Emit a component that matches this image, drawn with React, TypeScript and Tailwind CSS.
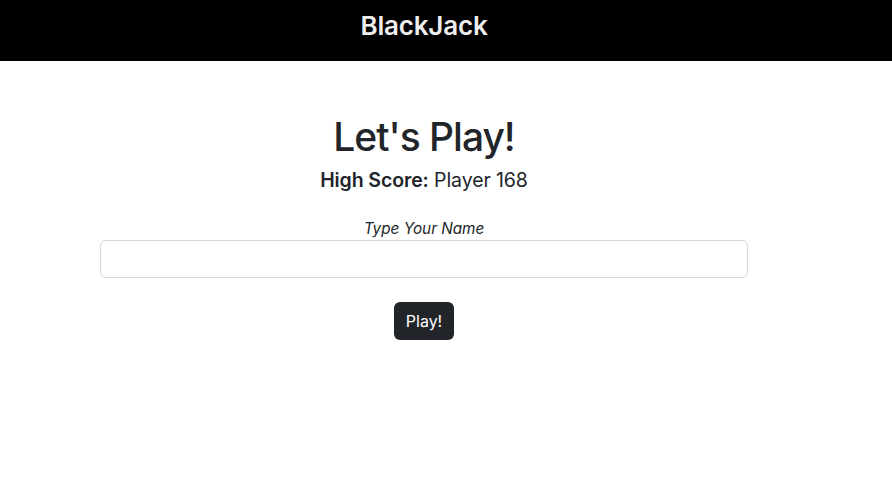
import { useState } from "react";

export default function App() {
  const [name, setName] = useState("");

  return (
    <div className="min-h-[487px] bg-white text-[#212529] font-['Inter','Noto_Sans',sans-serif]">
      <header className="h-[61px] bg-black">
        <div className="ml-[100px] w-[648px] pt-[10px] flex justify-center">
          <h1 className="text-[26px] leading-[32px] font-semibold text-[#eeeeee] tracking-[-0.2px]">BlackJack</h1>
        </div>
      </header>

      <main className="ml-[100px] w-[648px] flex flex-col items-center">
        <h2 className="mt-[52px] text-[39px] leading-[48px] font-medium tracking-[-1px]">Let's Play!</h2>
        <p className="mt-[7px] text-[19.5px] leading-[24px] tracking-[-0.1px]">
          <span className="font-semibold">High Score:</span> Player 168
        </p>

        <label htmlFor="name" className="mt-[27px] text-[15.3px] leading-[20px] italic">
          Type Your Name
        </label>
        <input
          id="name"
          value={name}
          onChange={(e) => setName(e.target.value)}
          className="mt-[1px] w-full h-[38px] px-3 border border-[#d6d8dc] rounded-[6px] outline-none"
        />

        <button className="mt-[24px] h-[38px] px-3 rounded-[6px] bg-[#212529] text-white text-[16px]">
          Play!
        </button>
      </main>
    </div>
  );
}
